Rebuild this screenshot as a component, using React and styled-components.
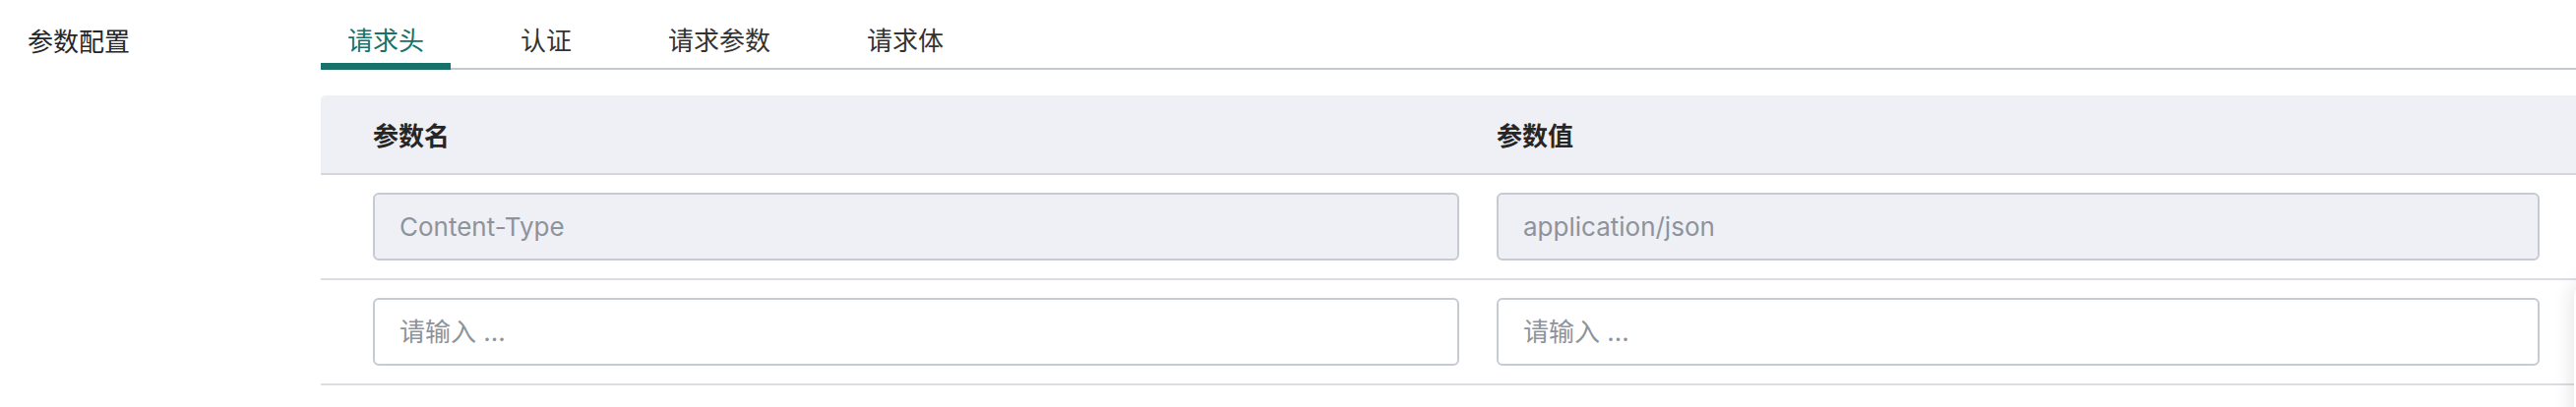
import React from "react";
import styled, { createGlobalStyle } from "styled-components";

const GlobalStyle = createGlobalStyle`
  html, body { margin: 0; padding: 0; background: #ffffff; }
  body { font-family: "Noto Sans CJK SC", "Liberation Sans", sans-serif; overflow: hidden; }
  * { box-sizing: border-box; }
`;

const Page = styled.div`
  position: relative;
  display: flex;
  width: 100%;
  height: 414px;
  overflow: hidden;
`;

const LabelCol = styled.div`
  flex: 0 0 326px;
  padding: 28px 0 0 28px;
  font-size: 26px;
  line-height: 26px;
  color: #262626;
`;

const Content = styled.div`
  flex: 1;
  min-width: 0;
`;

const TabBar = styled.div`
  display: flex;
  gap: 44px;
  height: 71px;
  box-shadow: inset 0 -2px 0 #c4c8d0;
`;

const Tab = styled.div`
  position: relative;
  padding: 27px 27px 0;
  font-size: 26px;
  line-height: 26px;
  color: ${(p) => (p.$active ? "#18726a" : "#333333")};
  cursor: pointer;
  &::after {
    content: "";
    display: ${(p) => (p.$active ? "block" : "none")};
    position: absolute;
    left: 0;
    right: 0;
    bottom: 0;
    height: 7px;
    background: #18726a;
  }
`;

const Table = styled.div`
  margin-top: 26px;
`;

const HeaderRow = styled.div`
  display: grid;
  grid-template-columns: 1104px 1fr;
  column-gap: 38px;
  align-items: center;
  height: 81px;
  padding: 0 37px 0 53px;
  background: #eff0f5;
  border-top-left-radius: 5px;
  border-bottom: 2px solid #d4d7dd;
`;

const HeaderCell = styled.div`
  font-size: 26px;
  line-height: 26px;
  font-weight: 700;
  color: #262626;
`;

const BodyRow = styled.div`
  display: grid;
  grid-template-columns: 1104px 1fr;
  column-gap: 38px;
  padding: 18px 37px 18px 53px;
  border-bottom: 2px solid #dadde2;
`;

const Field = styled.input`
  display: block;
  width: 100%;
  height: 69px;
  margin: 0;
  padding: 0 25px;
  border: 2px solid #c6cad2;
  border-radius: 6px;
  outline: none;
  font-family: Inter, "Noto Sans CJK SC", sans-serif;
  font-size: 26px;
  color: #8e939b;
  -webkit-text-fill-color: #8e939b;
  background: ${(p) => (p.disabled ? "#eff0f5" : "#ffffff")};
  opacity: 1;
  &::placeholder {
    color: #8e939b;
    -webkit-text-fill-color: #8e939b;
    opacity: 1;
  }
`;

const FloatPanel = styled.div`
  position: absolute;
  left: 2616px;
  top: 287px;
  width: 120px;
  height: 200px;
  background: #ffffff;
  border-radius: 14px;
  box-shadow: 0 0 22px rgba(0, 0, 0, 0.13);
`;

const tabs = ["请求头", "认证", "请求参数", "请求体"];

const rows = [
  { name: "Content-Type", value: "application/json", locked: true },
  { name: "", value: "", locked: false },
];

export default function App() {
  return (
    <>
      <GlobalStyle />
      <Page>
        <LabelCol>参数配置</LabelCol>
        <Content>
          <TabBar>
            {tabs.map((t, i) => (
              <Tab key={t} $active={i === 0}>
                {t}
              </Tab>
            ))}
          </TabBar>
          <Table>
            <HeaderRow>
              <HeaderCell>参数名</HeaderCell>
              <HeaderCell>参数值</HeaderCell>
            </HeaderRow>
            {rows.map((r, i) => (
              <BodyRow key={i}>
                <Field
                  disabled={r.locked}
                  readOnly
                  value={r.name}
                  placeholder="请输入 ..."
                />
                <Field
                  disabled={r.locked}
                  readOnly
                  value={r.value}
                  placeholder="请输入 ..."
                />
              </BodyRow>
            ))}
          </Table>
        </Content>
        <FloatPanel />
      </Page>
    </>
  );
}
